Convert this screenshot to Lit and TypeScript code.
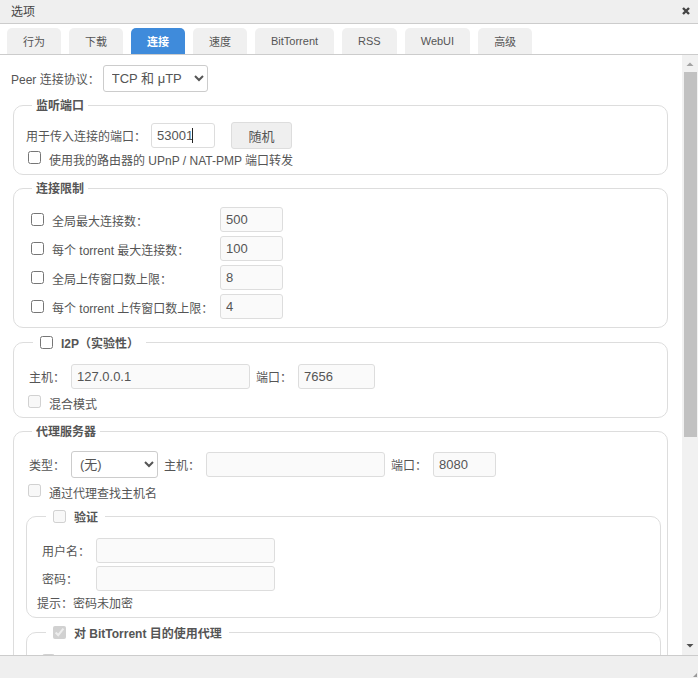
import { LitElement, html, css } from "lit";
import { customElement } from "lit/decorators.js";

const TABS = ["行为", "下载", "连接", "速度", "BitTorrent", "RSS", "WebUI", "高级"];
const LIMITS = [
  ["全局最大连接数：", "500"],
  ["每个 torrent 最大连接数：", "100"],
  ["全局上传窗口数上限：", "8"],
  ["每个 torrent 上传窗口数上限：", "4"],
];

@customElement("app-root")
export class AppRoot extends LitElement {
  static styles = css`
    :host {
      display: flex;
      flex-direction: column;
      width: 698px;
      height: 678px;
      overflow: hidden;
      background: #fff;
      color: #555;
      font: 12px "Liberation Sans", "Noto Sans CJK SC", sans-serif;
    }
    * { box-sizing: border-box; }
    .title {
      flex: none;
      height: 24px;
      background: #efefef;
      border-bottom: 1px solid #ccc;
      display: flex;
      align-items: center;
      justify-content: space-between;
      padding: 0 7px 3px 11px;
      color: #444;
    }
    .title svg { display: block; margin-top: 2px; }
    .tabs {
      flex: none;
      height: 31px;
      padding: 4px 0 0 7px;
      display: flex;
      gap: 8px;
      border-bottom: 1px solid #ccc;
    }
    .tab {
      height: 26px;
      padding: 0 16px;
      min-width: 54px;
      border-radius: 5px 5px 0 0;
      background: #f0f0f0;
      color: #555;
      font-size: 11px;
      display: flex;
      align-items: center;
      justify-content: center;
    }
    .tab.active { background: #3f8bdb; color: #fff; font-weight: bold; }
    .main { flex: 1; min-height: 0; display: flex; }
    .content {
      flex: 1;
      min-width: 0;
      overflow: hidden;
      padding: 10px 14px 0 13px;
    }
    .peer { display: flex; align-items: center; height: 27px; margin-left: -2px; gap: 3px; margin-bottom: 5px; }
    select {
      font: 13px "Liberation Sans", "Noto Sans CJK SC", sans-serif;
      color: #555;
      background: #fff;
      border: 1px solid #ccc;
      border-radius: 3px;
      height: 27px;
      padding: 0 4px;
      margin: 0;
    }
    .proto { width: 105px; }
    .ptype { width: 87px; }
    input[type="text"] {
      font: 13px "Liberation Sans", "Noto Sans CJK SC", sans-serif;
      color: #555;
      height: 25px;
      border: 1px solid #ddd;
      border-radius: 3px;
      background: #fafafa;
      padding: 0 5px;
      margin: 0;
      outline: none;
      display: block;
    }
    input.w63 { width: 63px; }
    input.w77 { width: 77px; }
    input.w179 { width: 179px; }
    input.live { width: 64px; background: #fff; }
    input[type="checkbox"] { margin: 0; width: 13px; height: 13px; flex: none; }
    button {
      font: 13px "Liberation Sans", "Noto Sans CJK SC", sans-serif;
      color: #555;
      width: 61px;
      height: 27px;
      background: #efefef;
      border: 1px solid #ddd;
      border-radius: 3px;
      margin: 0;
      padding: 0;
    }
    fieldset {
      margin: 0 0 5px;
      padding: 0;
      min-width: 0;
      border: 1px solid #ddd;
      border-radius: 10px;
    }
    legend {
      margin-left: 18px;
      padding: 0 4px;
      height: 16px;
      line-height: 18px;
      font-weight: bold;
      display: flex;
      align-items: flex-start;
      color: #555;
    }
    legend.chk { margin-left: 19px; padding: 0 7px; gap: 8px; height: 18px; line-height: 18px; align-items: center; }
    legend.chk span { padding-top: 4px; }
    .row { display: flex; align-items: center; }
    .listen { padding: 9px 0 0 12px; height: 61px; }
    .listen .row:first-child { height: 27px; }
    .cap { width: 125px; }
    .listen button { margin-left: 16px; }
    .check { gap: 8px; height: 20px; margin-left: 2px; }
    .check.up input { margin-bottom: 3px; }
    .limits {
      padding: 11px 0 8px 17px;
      display: grid;
      grid-template-columns: 189px 63px;
      row-gap: 4px;
      align-items: center;
    }
    .limits .check { margin: 0; height: 25px; }
    .limits .check span { padding-top: 2px; }
    .i2p { padding: 13px 0 0 15px; height: 66px; }
    .lab { flex: none; }
    .host { gap: 6px; }
    .host .lab { width: 36px; }
    .i2p .check, .proxy .check { margin: 0 0 0 -1px; }
    .i2p .check { margin-top: 4px; height: 20px; }
    .proxy { padding: 12px 6px 0 12px; }
    .proxy .host { padding-left: 3px; height: 27px; }
    .proxy > .check { margin: 4px 0 0 2px; height: 20px; }
    .inner { margin: 5px 0 0; border-radius: 10px; }
    .auth { padding: 13px 0 0 15px; height: 92px; }
    .auth .row { height: 25px; margin-bottom: 3px; }
    .auth .lab { width: 54px; }
    .hint { margin: 0 0 0 -5px; line-height: 20px; }
    .bt { height: 60px; padding: 9px 0 0 16px; }
    .sb {
      flex: none;
      width: 16px;
      background: #f1f1f1;
      display: flex;
      flex-direction: column;
      align-items: center;
    }
    .sb svg { display: block; flex: none; }
    .track { flex: 1; width: 100%; padding-left: 2px; padding-right: 1px; }
    .thumb { height: 365px; background: #c1c1c1; }
    .footer {
      flex: none;
      height: 23px;
      background: #efefef;
      border-top: 1px solid #ccc;
      display: flex;
      justify-content: flex-end;
      align-items: flex-end;
    }
    .footer svg { display: block; }
    .caretwrap { position: relative; }
    .caret { position: absolute; left: 41px; top: 5px; width: 1px; height: 15px; background: #222; }
  `;

  render() {
    return html`
      <div class="title">
        <span>选项</span>
        <svg width="10" height="10" viewBox="0 0 10 10"><path d="M2 2L8 8M8 2L2 8" stroke="#444" stroke-width="2.4" fill="none"/></svg>
      </div>
      <div class="tabs">
        ${TABS.map((t) => html`<div class="tab ${t === "连接" ? "active" : ""}">${t}</div>`)}
      </div>
      <div class="main">
        <div class="content">
          <div class="peer">
            <span>Peer 连接协议：</span>
            <select class="proto"><option>TCP 和 μTP</option></select>
          </div>
          <fieldset>
            <legend>监听端口</legend>
            <div class="listen">
              <div class="row">
                <span class="cap">用于传入连接的端口：</span>
                <div class="caretwrap"><input class="live" type="text" .value=${"53001"} /><span class="caret"></span></div>
                <button>随机</button>
              </div>
              <label class="row check up"><input type="checkbox" /><span>使用我的路由器的 UPnP / NAT-PMP 端口转发</span></label>
            </div>
          </fieldset>
          <fieldset>
            <legend>连接限制</legend>
            <div class="limits">
              ${LIMITS.map(
                ([l, v]) => html`
                  <label class="row check"><input type="checkbox" /><span>${l}</span></label>
                  <input class="w63" type="text" disabled .value=${v} />
                `
              )}
            </div>
          </fieldset>
          <fieldset>
            <legend class="chk"><input type="checkbox" /><span>I2P（实验性）</span></legend>
            <div class="i2p">
              <div class="row host">
                <span class="lab">主机：</span>
                <input class="w179" type="text" disabled .value=${"127.0.0.1"} />
                <span class="lab">端口：</span>
                <input class="w77" type="text" disabled .value=${"7656"} />
              </div>
              <label class="row check up"><input type="checkbox" disabled /><span>混合模式</span></label>
            </div>
          </fieldset>
          <fieldset>
            <legend>代理服务器</legend>
            <div class="proxy">
              <div class="row host">
                <span class="lab">类型：</span>
                <select class="ptype"><option>(无)</option></select>
                <span class="lab">主机：</span>
                <input class="w179" type="text" disabled />
                <span class="lab">端口：</span>
                <input class="w63" type="text" disabled .value=${"8080"} />
              </div>
              <label class="row check up"><input type="checkbox" disabled /><span>通过代理查找主机名</span></label>
              <fieldset class="inner">
                <legend class="chk"><input type="checkbox" disabled /><span>验证</span></legend>
                <div class="auth">
                  <div class="row"><span class="lab">用户名：</span><input class="w179" type="text" disabled /></div>
                  <div class="row"><span class="lab">密码：</span><input class="w179" type="text" disabled /></div>
                  <div class="hint">提示：密码未加密</div>
                </div>
              </fieldset>
              <fieldset class="inner">
                <legend class="chk"><input type="checkbox" disabled checked /><span>对 BitTorrent 目的使用代理</span></legend>
                <div class="bt"><label class="row check"><input type="checkbox" disabled /></label></div>
              </fieldset>
            </div>
          </fieldset>
        </div>
        <div class="sb">
          <svg width="16" height="17" viewBox="0 0 16 17"><path d="M4.5 11L8 7.5L11.5 11Z" fill="#a3a3a3"/></svg>
          <div class="track"><div class="thumb"></div></div>
          <svg width="16" height="17" viewBox="0 0 16 17"><path d="M4.5 6L8 9.5L11.5 6Z" fill="#505050"/></svg>
        </div>
      </div>
      <div class="footer">
        <svg width="6" height="6" viewBox="0 0 6 6"><path d="M5 1V5H1Z" fill="#999"/></svg>
      </div>
    `;
  }
}
